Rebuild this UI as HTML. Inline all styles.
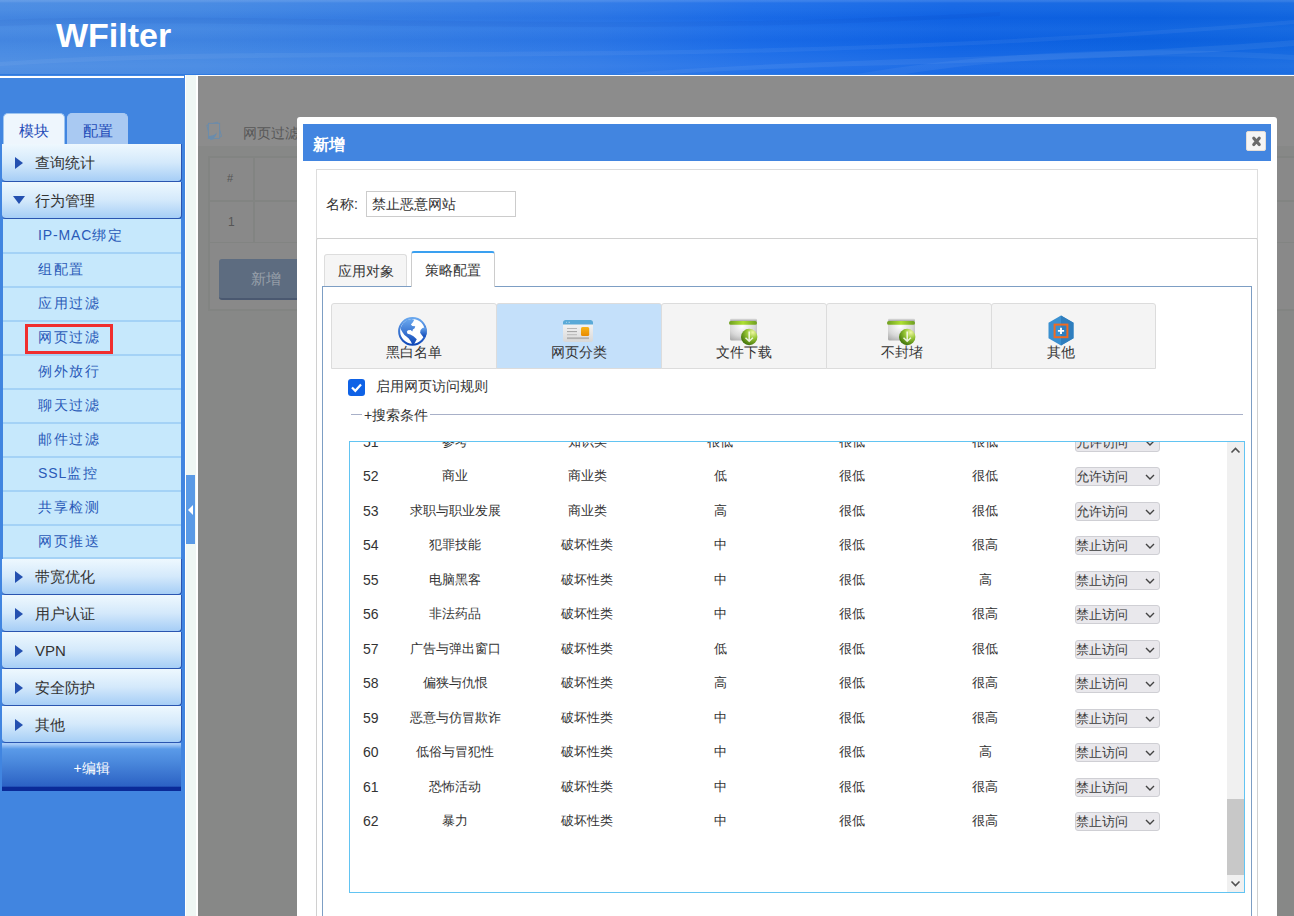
<!DOCTYPE html>
<html><head><meta charset="utf-8">
<style>
*{box-sizing:border-box;margin:0;padding:0}
html,body{width:1294px;height:916px;overflow:hidden;background:#8a8a8a;font-family:"Liberation Sans",sans-serif;position:relative}
.a{position:absolute}
#hdr{left:0;top:0;width:1294px;height:75px;border-bottom:1px solid #2f7ae0;background:linear-gradient(180deg,rgba(255,255,255,.16) 0,rgba(255,255,255,.16) 1px,rgba(255,255,255,.05) 3px,rgba(255,255,255,.03) 10px,rgba(0,40,170,.04) 18px,rgba(255,255,255,.03) 29px,rgba(0,40,170,.035) 40px,rgba(255,255,255,.02) 50px,rgba(255,255,255,.07) 66px,rgba(255,255,255,.04) 75px),linear-gradient(90deg,#4689e2 0px,#4186e2 200px,#3880e4 350px,#2a76e6 600px,#1a6ce8 750px,#0f63e4 950px,#0c62e0 1150px,#1066e0 1294px);overflow:hidden}
#logo{left:56px;top:17px;font:bold 34px/36px "Liberation Sans",sans-serif;color:#fff;white-space:nowrap}
#hline{left:0;top:76px;width:184px;height:2px;background:#fff}
#side{left:0;top:75px;width:185px;height:841px;background:#4185e0}
#strip{left:185px;top:75px;width:12px;height:841px;background:#eff7f4;border-left:1px solid #fff}
#stripline{left:196px;top:75px;width:2px;height:841px;background:#fff}
#handle{left:186px;top:475px;width:9px;height:69px;background:#5a9ae6}
#handle i{position:absolute;left:2px;top:30px;width:0;height:0;border-top:5px solid transparent;border-bottom:5px solid transparent;border-right:5px solid #fff}
.tab{top:113px;height:31px;border-radius:5px 5px 0 0;font-size:15px;line-height:33px;text-align:center;color:#1f4cb8;border:1px solid #9cc4f0;border-bottom:none}
.mh{left:2px;width:180px;border-right:1px solid #2a55b0;border-bottom:1px solid #2a55b0;border-radius:0 0 4px 4px;background:linear-gradient(#eef8fe,#d4e9fb 50%,#a6cef6);color:#333;font-size:15px}
.mh span{position:absolute;left:33px;top:0;white-space:nowrap}
.mh b{position:absolute;left:13px;width:0;height:0}
.tri-r{border-top:6px solid transparent;border-bottom:6px solid transparent;border-left:8px solid #2450b0}
.tri-d{border-left:6.5px solid transparent;border-right:6.5px solid transparent;border-top:8px solid #2450b0;margin-left:-2px}
.sm{left:3px;width:178px;height:34px;background:#c6e8fc;color:#2a5ab8;font-size:14px}
.sm i{position:absolute;left:0;top:-1px;width:178px;height:2px;background:#a4d2f6}
.sm span{position:absolute;left:35px;top:-1px;white-space:nowrap;line-height:34px;letter-spacing:1.5px}
</style></head><body>
<div id="hdr" class="a"><svg class="a" style="left:0;top:0" width="1294" height="75">
<path d="M0 62 C300 40 700 70 1294 20 L1294 24 C700 74 300 46 0 66 Z" fill="rgba(255,255,255,.05)"/>
<path d="M600 75 C850 55 1050 60 1294 40 L1294 46 C1050 66 850 62 650 75 Z" fill="rgba(255,255,255,.06)"/>
<path d="M850 75 C1000 50 1150 45 1294 55 L1294 60 C1150 52 1000 58 900 75 Z" fill="rgba(255,255,255,.05)"/>
<path d="M0 20 C250 10 600 35 1000 12 L1000 16 C600 40 250 16 0 26 Z" fill="rgba(0,30,150,.05)"/>
</svg><div id="logo" class="a">WFilter</div></div>
<div id="side" class="a"></div>
<div id="hline" class="a"></div>
<div id="strip" class="a"></div><div id="stripline" class="a"></div>
<div id="handle" class="a"><i></i></div>
<div class="a tab" style="left:3px;width:62px;background:#eef6fd">模块</div>
<div class="a tab" style="left:67px;width:61px;background:#a9c9f2;border-color:#a9c9f2">配置</div>
<div class="a mh" style="top:144px;height:38px;line-height:38px"><b class="tri-r" style="top:13px"></b><span>查询统计</span></div>
<div class="a mh" style="top:182px;height:37px;line-height:37px"><b class="tri-d" style="top:14px"></b><span>行为管理</span></div>
<div class="a sm" style="top:219px"><span><em style="font-style:normal;letter-spacing:0.85px">IP-MAC</em>绑定</span></div>
<div class="a sm" style="top:253px"><i></i><span>组配置</span></div>
<div class="a sm" style="top:287px"><i></i><span>应用过滤</span></div>
<div class="a sm" style="top:321px"><i></i><span>网页过滤</span></div>
<div class="a sm" style="top:355px"><i></i><span>例外放行</span></div>
<div class="a sm" style="top:389px"><i></i><span>聊天过滤</span></div>
<div class="a sm" style="top:423px"><i></i><span>邮件过滤</span></div>
<div class="a sm" style="top:457px"><i></i><span><em style="font-style:normal;letter-spacing:0.85px">SSL</em>监控</span></div>
<div class="a sm" style="top:491px"><i></i><span>共享检测</span></div>
<div class="a sm" style="top:525px"><i></i><span>网页推送</span></div>
<div class="a" style="left:3px;top:557px;width:178px;height:2px;background:#a4d2f6"></div>
<div class="a mh" style="top:559px;height:36px;line-height:36px"><b class="tri-r" style="top:12px"></b><span>带宽优化</span></div>
<div class="a mh" style="top:595px;height:37px;line-height:37px"><b class="tri-r" style="top:13px"></b><span>用户认证</span></div>
<div class="a mh" style="top:632px;height:37px;line-height:37px"><b class="tri-r" style="top:13px"></b><span>VPN</span></div>
<div class="a mh" style="top:669px;height:37px;line-height:37px"><b class="tri-r" style="top:13px"></b><span>安全防护</span></div>
<div class="a mh" style="top:706px;height:37px;line-height:37px"><b class="tri-r" style="top:13px"></b><span>其他</span></div>
<div class="a" style="left:2px;top:743px;width:179px;height:48px;background:linear-gradient(#a8ccf8 0,#a8ccf8 1px,#5a9ae8 6px,#4a88dc 40%,#2c62c4 90%,#0a2a98 92%,#0a2a98 100%);color:#fff;font-size:14px;text-align:center;line-height:50px">+编辑</div>
<div class="a" style="left:25px;top:324px;width:88px;height:30px;border:3px solid #f02e2e"></div>
<div class="a" style="left:196px;top:75px;width:1098px;height:1px;background:#fff"></div>
<div class="a" style="left:198px;top:76px;width:1096px;height:70px;background:#8c8c8c"></div>
<div class="a" style="left:198px;top:146px;width:1096px;height:770px;background:#878887"></div>
<svg class="a" style="left:200px;top:115px" width="30" height="30" viewBox="0 0 916 916">
<path d="M205 315 L535 215 L660 655 L325 755 Z" fill="#8c8c8c" stroke="#6a8cac" stroke-width="28" stroke-linejoin="round"/>
<rect x="258" y="255" width="340" height="460" fill="#8e8e8e" stroke="#6a8cac" stroke-width="28"/>
<path d="M265 640 C400 630 490 590 510 510 C520 600 470 680 400 715 L265 715 Z" fill="#6a8cac"/>
</svg>
<div class="a" style="left:243px;top:123px;font-size:14px;line-height:20px;color:#585858">网页过滤</div>
<div class="a" style="left:208px;top:156px;width:1086px;height:88px;border:2px solid #828482;border-right:none;background:#898989"></div>
<div class="a" style="left:208px;top:200px;width:1086px;height:2px;background:#828482"></div>
<div class="a" style="left:253px;top:156px;width:2px;height:87px;background:#828482"></div>
<div class="a" style="left:227px;top:170px;font-size:11px;line-height:16px;color:#555">#</div>
<div class="a" style="left:228px;top:214px;font-size:12px;line-height:16px;color:#555">1</div>
<div class="a" style="left:208px;top:243px;width:1086px;height:68px;border:2px solid #828482;border-top:none;border-right:none;background:#898989"></div>
<div class="a" style="left:219px;top:259px;width:90px;height:41px;background:#5d6c80;border-bottom:2px solid #4a5870;border-radius:3px;color:#98a0aa;font-size:15px;line-height:40px;padding-left:32px">新增</div>
<div class="a" style="left:297px;top:117px;width:980px;height:820px;background:#fff;border-radius:3px"></div>
<div class="a" style="left:303px;top:124px;width:968px;height:37px;background:#4285e0"></div>
<div class="a" style="left:313px;top:126px;height:37px;line-height:37px;font-size:16px;font-weight:bold;color:#fff">新增</div>
<div class="a" style="left:1246px;top:131px;width:20px;height:20px;background:#f5f5f5;border-radius:2px;border:1px solid #e4ddd6"><svg width="18" height="18" style="position:absolute;left:0;top:0"><path d="M6.8 6.3L12.2 12.5M12.2 6.3L6.8 12.5" stroke="#6b6b6b" stroke-width="3.2" stroke-linecap="round"/></svg></div>
<div class="a" style="left:316px;top:169px;width:942px;height:70px;border:1px solid #ddd"></div>
<div class="a" style="left:326px;top:194px;font-size:14px;line-height:20px;color:#333;white-space:nowrap">名称:</div>
<div class="a" style="left:366px;top:191px;width:150px;height:26px;border:1px solid #ccc;font-size:14px;line-height:24px;color:#333;padding-left:5px;white-space:nowrap">禁止恶意网站</div>
<div class="a" style="left:316px;top:238px;width:942px;height:700px;border:1px solid #d0d0d0;border-radius:2px"></div>
<div class="a" style="left:324px;top:254px;width:83px;height:33px;background:#f5f5f5;border:1px solid #ddd;border-bottom:none;border-radius:3px 3px 0 0;font-size:14px;line-height:32px;text-align:center;color:#333">应用对象</div>
<div class="a" style="left:322px;top:286px;width:930px;height:700px;border:1px solid #7d9ec4"></div>
<div class="a" style="left:411px;top:251px;width:84px;height:36px;background:#fff;border:1px solid #ccc;border-top:2px solid #3aa0f0;border-bottom:none;border-radius:3px 3px 0 0;font-size:14px;line-height:34px;text-align:center;color:#333">策略配置</div>
<div class="a" style="left:331px;top:303px;width:166px;height:66px;background:#f4f4f4;border:1px solid #dcdcdc;border-radius:3px 3px 0 0"></div>
<div class="a" style="left:363.5px;top:342px;width:100px;text-align:center;font-size:14px;line-height:20px;color:#333;white-space:nowrap">黑白名单</div>
<div class="a" style="left:496px;top:303px;width:166px;height:66px;background:#c4e0fa;border:1px solid #dcdcdc;border-radius:3px 3px 0 0"></div>
<div class="a" style="left:528.5px;top:342px;width:100px;text-align:center;font-size:14px;line-height:20px;color:#333;white-space:nowrap">网页分类</div>
<div class="a" style="left:661px;top:303px;width:166px;height:66px;background:#f4f4f4;border:1px solid #dcdcdc;border-radius:3px 3px 0 0"></div>
<div class="a" style="left:693.5px;top:342px;width:100px;text-align:center;font-size:14px;line-height:20px;color:#333;white-space:nowrap">文件下载</div>
<div class="a" style="left:826px;top:303px;width:166px;height:66px;background:#f4f4f4;border:1px solid #dcdcdc;border-radius:3px 3px 0 0"></div>
<div class="a" style="left:851.5px;top:342px;width:100px;text-align:center;font-size:14px;line-height:20px;color:#333;white-space:nowrap">不封堵</div>
<div class="a" style="left:991px;top:303px;width:165px;height:66px;background:#f4f4f4;border:1px solid #dcdcdc;border-radius:3px 3px 0 0"></div>
<div class="a" style="left:1011px;top:342px;width:100px;text-align:center;font-size:14px;line-height:20px;color:#333;white-space:nowrap">其他</div>
<svg class="a" style="left:395px;top:313px" width="36" height="36" viewBox="0 0 916 916">
<defs><linearGradient id="gb" x1="0" y1="0" x2="0" y2="1"><stop offset="0" stop-color="#6aa8ee"/><stop offset="1" stop-color="#1048b8"/></linearGradient></defs>
<circle cx="445" cy="466" r="340" fill="#fff" stroke="url(#gb)" stroke-width="52"/>
<path d="M140 380 L200 270 L300 180 L420 150 L490 170 L455 235 L405 295 L440 330 L515 335 L500 385 L455 420 L440 470 L400 430 L330 440 L300 480 L320 525 L390 550 L470 590 L555 665 L520 730 L490 790 L440 800 L400 720 L350 650 L290 600 L240 560 L190 490 L150 420 Z" fill="url(#gb)"/>
<path d="M700 380 L650 430 L640 500 L680 560 L720 610 L780 600 L805 520 L800 420 L770 360 Z" fill="url(#gb)"/>
</svg>
<svg class="a" style="left:563px;top:320px" width="30" height="22" viewBox="0 0 30 22">
<defs><linearGradient id="gw" x1="0" y1="0" x2="0" y2="1"><stop offset="0" stop-color="#fafafa"/><stop offset="1" stop-color="#d8d8d8"/></linearGradient>
<linearGradient id="go" x1="0" y1="0" x2="0" y2="1"><stop offset="0" stop-color="#f8b418"/><stop offset="1" stop-color="#e88a00"/></linearGradient></defs>
<rect x="0" y="0" width="30" height="22" rx="2.5" fill="url(#gw)"/>
<path d="M2.5 0 H27.5 A2.5 2.5 0 0 1 30 2.5 V4.5 H0 V2.5 A2.5 2.5 0 0 1 2.5 0Z" fill="#5aaad8"/>
<rect x="4" y="8" width="10" height="1" fill="#b8b8b8"/><rect x="4" y="11.1" width="10" height="1" fill="#a0a0a0"/><rect x="4" y="14.2" width="10" height="1" fill="#b8b8b8"/>
<rect x="18" y="7.1" width="8.2" height="8.9" rx="1.5" fill="url(#go)"/>
<rect x="4" y="17.3" width="22" height="1.8" fill="#b0b0b0"/><rect x="3" y="1.8" width="1" height="1" fill="rgba(255,255,255,.5)"/><rect x="5.5" y="1.8" width="1.5" height="1" fill="rgba(255,255,255,.5)"/>
</svg>
<svg class="a" style="left:729px;top:318px" width="30" height="28" viewBox="0 0 30 28">
<defs><radialGradient id="gg729" cx="45%" cy="35%" r="75%"><stop offset="0" stop-color="#fefefe"/><stop offset="0.6" stop-color="#d8d8d8"/><stop offset="1" stop-color="#aaaaaa"/></radialGradient>
<linearGradient id="gt729" x1="0" y1="0" x2="1" y2="0"><stop offset="0" stop-color="#6e9e20"/><stop offset="0.5" stop-color="#aee034"/><stop offset="1" stop-color="#6e9e20"/></linearGradient>
<linearGradient id="gs729" x1="0" y1="0" x2="0" y2="1"><stop offset="0" stop-color="#f0f0f0"/><stop offset="1" stop-color="#9a9a9a"/></linearGradient>
<radialGradient id="gc729" cx="72%" cy="22%" r="85%"><stop offset="0" stop-color="#eef8a0"/><stop offset="0.45" stop-color="#94c434"/><stop offset="1" stop-color="#3e7008"/></radialGradient></defs>
<rect x="1" y="1" width="27" height="21.5" rx="1.5" fill="url(#gg729)"/>
<rect x="1.5" y="0.3" width="26" height="3.2" rx="1" fill="url(#gs729)"/>
<rect x="0" y="3" width="28" height="3.8" rx="1.9" fill="url(#gt729)"/>
<circle cx="20.2" cy="19" r="8.2" fill="url(#gc729)"/>
<path d="M20.2 13.5 V23.3 M16.5 19.8 L20.2 23.3 L23.9 19.8" stroke="rgba(255,255,255,.85)" stroke-width="1.5" fill="none"/>
</svg>
<svg class="a" style="left:887px;top:318px" width="30" height="28" viewBox="0 0 30 28">
<defs><radialGradient id="gg887" cx="45%" cy="35%" r="75%"><stop offset="0" stop-color="#fefefe"/><stop offset="0.6" stop-color="#d8d8d8"/><stop offset="1" stop-color="#aaaaaa"/></radialGradient>
<linearGradient id="gt887" x1="0" y1="0" x2="1" y2="0"><stop offset="0" stop-color="#6e9e20"/><stop offset="0.5" stop-color="#aee034"/><stop offset="1" stop-color="#6e9e20"/></linearGradient>
<linearGradient id="gs887" x1="0" y1="0" x2="0" y2="1"><stop offset="0" stop-color="#f0f0f0"/><stop offset="1" stop-color="#9a9a9a"/></linearGradient>
<radialGradient id="gc887" cx="72%" cy="22%" r="85%"><stop offset="0" stop-color="#eef8a0"/><stop offset="0.45" stop-color="#94c434"/><stop offset="1" stop-color="#3e7008"/></radialGradient></defs>
<rect x="1" y="1" width="27" height="21.5" rx="1.5" fill="url(#gg887)"/>
<rect x="1.5" y="0.3" width="26" height="3.2" rx="1" fill="url(#gs887)"/>
<rect x="0" y="3" width="28" height="3.8" rx="1.9" fill="url(#gt887)"/>
<circle cx="20.2" cy="19" r="8.2" fill="url(#gc887)"/>
<path d="M20.2 13.5 V23.3 M16.5 19.8 L20.2 23.3 L23.9 19.8" stroke="rgba(255,255,255,.85)" stroke-width="1.5" fill="none"/>
</svg>
<svg class="a" style="left:1048px;top:315px" width="26" height="31" viewBox="0 0 26 31">
<path d="M13 0.5 L25.5 7.8 V23.2 L13 30.5 L0.5 23.2 V7.8 Z" fill="#3a90d0"/>
<path d="M13 0.5 L25.5 7.8 V23.2 L13 30.5 Z" fill="#2f7ebe"/>
<rect x="6.6" y="9.6" width="12.8" height="12.6" fill="none" stroke="#f06a20" stroke-width="2"/>
<path d="M13 12.8 V19 M9.9 15.9 H16.1" stroke="#fff" stroke-width="1.9"/>
</svg>
<div class="a" style="left:348px;top:379px;width:17px;height:17px;background:#0f62e6;border-radius:3px"><svg width="17" height="17" style="position:absolute;left:0;top:0"><path d="M4 8.5 L7.3 11.8 L13 5.5" stroke="#fff" stroke-width="2.2" fill="none"/></svg></div>
<div class="a" style="left:376px;top:377px;font-size:13.6px;line-height:20px;color:#333;white-space:nowrap">启用网页访问规则</div>
<div class="a" style="left:351px;top:414px;width:892px;height:1px;background:#a8b0c8"></div>
<div class="a" style="left:362px;top:405px;padding:0 2px;background:#fff;font-size:14px;line-height:20px;color:#333;white-space:nowrap">+搜索条件</div>
<div class="a" style="left:349px;top:441px;width:896px;height:452px;border:1px solid #62c4f2;overflow:hidden">
<div class="a" style="left:13px;top:-10.5px;font-size:14px;line-height:20px;color:#333">51</div>
<div class="a" style="left:25px;top:-10.5px;width:160px;text-align:center;font-size:13px;line-height:20px;color:#333;white-space:nowrap">参考</div>
<div class="a" style="left:157px;top:-10.5px;width:160px;text-align:center;font-size:13px;line-height:20px;color:#333;white-space:nowrap">知识类</div>
<div class="a" style="left:290px;top:-10.5px;width:160px;text-align:center;font-size:13px;line-height:20px;color:#333;white-space:nowrap">很低</div>
<div class="a" style="left:422px;top:-10.5px;width:160px;text-align:center;font-size:13px;line-height:20px;color:#333;white-space:nowrap">很低</div>
<div class="a" style="left:555px;top:-10.5px;width:160px;text-align:center;font-size:13px;line-height:20px;color:#333;white-space:nowrap">很低</div>
<div class="a" style="left:725px;top:-9.5px;width:85px;height:19px;background:#e9e8ec;border:1px solid #cfcfd4;border-radius:3px;font-size:13px;line-height:17px;color:#3c3c3c;white-space:nowrap">允许访问<svg width="10" height="6" style="position:absolute;left:69px;top:6px"><path d="M1 1 L5 5 L9 1" stroke="#444" stroke-width="1.4" fill="none"/></svg></div>
<div class="a" style="left:13px;top:24.0px;font-size:14px;line-height:20px;color:#333">52</div>
<div class="a" style="left:25px;top:24.0px;width:160px;text-align:center;font-size:13px;line-height:20px;color:#333;white-space:nowrap">商业</div>
<div class="a" style="left:157px;top:24.0px;width:160px;text-align:center;font-size:13px;line-height:20px;color:#333;white-space:nowrap">商业类</div>
<div class="a" style="left:290px;top:24.0px;width:160px;text-align:center;font-size:13px;line-height:20px;color:#333;white-space:nowrap">低</div>
<div class="a" style="left:422px;top:24.0px;width:160px;text-align:center;font-size:13px;line-height:20px;color:#333;white-space:nowrap">很低</div>
<div class="a" style="left:555px;top:24.0px;width:160px;text-align:center;font-size:13px;line-height:20px;color:#333;white-space:nowrap">很低</div>
<div class="a" style="left:725px;top:25.0px;width:85px;height:19px;background:#e9e8ec;border:1px solid #cfcfd4;border-radius:3px;font-size:13px;line-height:17px;color:#3c3c3c;white-space:nowrap">允许访问<svg width="10" height="6" style="position:absolute;left:69px;top:6px"><path d="M1 1 L5 5 L9 1" stroke="#444" stroke-width="1.4" fill="none"/></svg></div>
<div class="a" style="left:13px;top:58.5px;font-size:14px;line-height:20px;color:#333">53</div>
<div class="a" style="left:25px;top:58.5px;width:160px;text-align:center;font-size:13px;line-height:20px;color:#333;white-space:nowrap">求职与职业发展</div>
<div class="a" style="left:157px;top:58.5px;width:160px;text-align:center;font-size:13px;line-height:20px;color:#333;white-space:nowrap">商业类</div>
<div class="a" style="left:290px;top:58.5px;width:160px;text-align:center;font-size:13px;line-height:20px;color:#333;white-space:nowrap">高</div>
<div class="a" style="left:422px;top:58.5px;width:160px;text-align:center;font-size:13px;line-height:20px;color:#333;white-space:nowrap">很低</div>
<div class="a" style="left:555px;top:58.5px;width:160px;text-align:center;font-size:13px;line-height:20px;color:#333;white-space:nowrap">很低</div>
<div class="a" style="left:725px;top:59.5px;width:85px;height:19px;background:#e9e8ec;border:1px solid #cfcfd4;border-radius:3px;font-size:13px;line-height:17px;color:#3c3c3c;white-space:nowrap">允许访问<svg width="10" height="6" style="position:absolute;left:69px;top:6px"><path d="M1 1 L5 5 L9 1" stroke="#444" stroke-width="1.4" fill="none"/></svg></div>
<div class="a" style="left:13px;top:93.0px;font-size:14px;line-height:20px;color:#333">54</div>
<div class="a" style="left:25px;top:93.0px;width:160px;text-align:center;font-size:13px;line-height:20px;color:#333;white-space:nowrap">犯罪技能</div>
<div class="a" style="left:157px;top:93.0px;width:160px;text-align:center;font-size:13px;line-height:20px;color:#333;white-space:nowrap">破坏性类</div>
<div class="a" style="left:290px;top:93.0px;width:160px;text-align:center;font-size:13px;line-height:20px;color:#333;white-space:nowrap">中</div>
<div class="a" style="left:422px;top:93.0px;width:160px;text-align:center;font-size:13px;line-height:20px;color:#333;white-space:nowrap">很低</div>
<div class="a" style="left:555px;top:93.0px;width:160px;text-align:center;font-size:13px;line-height:20px;color:#333;white-space:nowrap">很高</div>
<div class="a" style="left:725px;top:94.0px;width:85px;height:19px;background:#e9e8ec;border:1px solid #cfcfd4;border-radius:3px;font-size:13px;line-height:17px;color:#3c3c3c;white-space:nowrap">禁止访问<svg width="10" height="6" style="position:absolute;left:69px;top:6px"><path d="M1 1 L5 5 L9 1" stroke="#444" stroke-width="1.4" fill="none"/></svg></div>
<div class="a" style="left:13px;top:127.5px;font-size:14px;line-height:20px;color:#333">55</div>
<div class="a" style="left:25px;top:127.5px;width:160px;text-align:center;font-size:13px;line-height:20px;color:#333;white-space:nowrap">电脑黑客</div>
<div class="a" style="left:157px;top:127.5px;width:160px;text-align:center;font-size:13px;line-height:20px;color:#333;white-space:nowrap">破坏性类</div>
<div class="a" style="left:290px;top:127.5px;width:160px;text-align:center;font-size:13px;line-height:20px;color:#333;white-space:nowrap">中</div>
<div class="a" style="left:422px;top:127.5px;width:160px;text-align:center;font-size:13px;line-height:20px;color:#333;white-space:nowrap">很低</div>
<div class="a" style="left:555px;top:127.5px;width:160px;text-align:center;font-size:13px;line-height:20px;color:#333;white-space:nowrap">高</div>
<div class="a" style="left:725px;top:128.5px;width:85px;height:19px;background:#e9e8ec;border:1px solid #cfcfd4;border-radius:3px;font-size:13px;line-height:17px;color:#3c3c3c;white-space:nowrap">禁止访问<svg width="10" height="6" style="position:absolute;left:69px;top:6px"><path d="M1 1 L5 5 L9 1" stroke="#444" stroke-width="1.4" fill="none"/></svg></div>
<div class="a" style="left:13px;top:162.0px;font-size:14px;line-height:20px;color:#333">56</div>
<div class="a" style="left:25px;top:162.0px;width:160px;text-align:center;font-size:13px;line-height:20px;color:#333;white-space:nowrap">非法药品</div>
<div class="a" style="left:157px;top:162.0px;width:160px;text-align:center;font-size:13px;line-height:20px;color:#333;white-space:nowrap">破坏性类</div>
<div class="a" style="left:290px;top:162.0px;width:160px;text-align:center;font-size:13px;line-height:20px;color:#333;white-space:nowrap">中</div>
<div class="a" style="left:422px;top:162.0px;width:160px;text-align:center;font-size:13px;line-height:20px;color:#333;white-space:nowrap">很低</div>
<div class="a" style="left:555px;top:162.0px;width:160px;text-align:center;font-size:13px;line-height:20px;color:#333;white-space:nowrap">很高</div>
<div class="a" style="left:725px;top:163.0px;width:85px;height:19px;background:#e9e8ec;border:1px solid #cfcfd4;border-radius:3px;font-size:13px;line-height:17px;color:#3c3c3c;white-space:nowrap">禁止访问<svg width="10" height="6" style="position:absolute;left:69px;top:6px"><path d="M1 1 L5 5 L9 1" stroke="#444" stroke-width="1.4" fill="none"/></svg></div>
<div class="a" style="left:13px;top:196.5px;font-size:14px;line-height:20px;color:#333">57</div>
<div class="a" style="left:25px;top:196.5px;width:160px;text-align:center;font-size:13px;line-height:20px;color:#333;white-space:nowrap">广告与弹出窗口</div>
<div class="a" style="left:157px;top:196.5px;width:160px;text-align:center;font-size:13px;line-height:20px;color:#333;white-space:nowrap">破坏性类</div>
<div class="a" style="left:290px;top:196.5px;width:160px;text-align:center;font-size:13px;line-height:20px;color:#333;white-space:nowrap">低</div>
<div class="a" style="left:422px;top:196.5px;width:160px;text-align:center;font-size:13px;line-height:20px;color:#333;white-space:nowrap">很低</div>
<div class="a" style="left:555px;top:196.5px;width:160px;text-align:center;font-size:13px;line-height:20px;color:#333;white-space:nowrap">很低</div>
<div class="a" style="left:725px;top:197.5px;width:85px;height:19px;background:#e9e8ec;border:1px solid #cfcfd4;border-radius:3px;font-size:13px;line-height:17px;color:#3c3c3c;white-space:nowrap">禁止访问<svg width="10" height="6" style="position:absolute;left:69px;top:6px"><path d="M1 1 L5 5 L9 1" stroke="#444" stroke-width="1.4" fill="none"/></svg></div>
<div class="a" style="left:13px;top:231.0px;font-size:14px;line-height:20px;color:#333">58</div>
<div class="a" style="left:25px;top:231.0px;width:160px;text-align:center;font-size:13px;line-height:20px;color:#333;white-space:nowrap">偏狭与仇恨</div>
<div class="a" style="left:157px;top:231.0px;width:160px;text-align:center;font-size:13px;line-height:20px;color:#333;white-space:nowrap">破坏性类</div>
<div class="a" style="left:290px;top:231.0px;width:160px;text-align:center;font-size:13px;line-height:20px;color:#333;white-space:nowrap">高</div>
<div class="a" style="left:422px;top:231.0px;width:160px;text-align:center;font-size:13px;line-height:20px;color:#333;white-space:nowrap">很低</div>
<div class="a" style="left:555px;top:231.0px;width:160px;text-align:center;font-size:13px;line-height:20px;color:#333;white-space:nowrap">很高</div>
<div class="a" style="left:725px;top:232.0px;width:85px;height:19px;background:#e9e8ec;border:1px solid #cfcfd4;border-radius:3px;font-size:13px;line-height:17px;color:#3c3c3c;white-space:nowrap">禁止访问<svg width="10" height="6" style="position:absolute;left:69px;top:6px"><path d="M1 1 L5 5 L9 1" stroke="#444" stroke-width="1.4" fill="none"/></svg></div>
<div class="a" style="left:13px;top:265.5px;font-size:14px;line-height:20px;color:#333">59</div>
<div class="a" style="left:25px;top:265.5px;width:160px;text-align:center;font-size:13px;line-height:20px;color:#333;white-space:nowrap">恶意与仿冒欺诈</div>
<div class="a" style="left:157px;top:265.5px;width:160px;text-align:center;font-size:13px;line-height:20px;color:#333;white-space:nowrap">破坏性类</div>
<div class="a" style="left:290px;top:265.5px;width:160px;text-align:center;font-size:13px;line-height:20px;color:#333;white-space:nowrap">中</div>
<div class="a" style="left:422px;top:265.5px;width:160px;text-align:center;font-size:13px;line-height:20px;color:#333;white-space:nowrap">很低</div>
<div class="a" style="left:555px;top:265.5px;width:160px;text-align:center;font-size:13px;line-height:20px;color:#333;white-space:nowrap">很高</div>
<div class="a" style="left:725px;top:266.5px;width:85px;height:19px;background:#e9e8ec;border:1px solid #cfcfd4;border-radius:3px;font-size:13px;line-height:17px;color:#3c3c3c;white-space:nowrap">禁止访问<svg width="10" height="6" style="position:absolute;left:69px;top:6px"><path d="M1 1 L5 5 L9 1" stroke="#444" stroke-width="1.4" fill="none"/></svg></div>
<div class="a" style="left:13px;top:300.0px;font-size:14px;line-height:20px;color:#333">60</div>
<div class="a" style="left:25px;top:300.0px;width:160px;text-align:center;font-size:13px;line-height:20px;color:#333;white-space:nowrap">低俗与冒犯性</div>
<div class="a" style="left:157px;top:300.0px;width:160px;text-align:center;font-size:13px;line-height:20px;color:#333;white-space:nowrap">破坏性类</div>
<div class="a" style="left:290px;top:300.0px;width:160px;text-align:center;font-size:13px;line-height:20px;color:#333;white-space:nowrap">中</div>
<div class="a" style="left:422px;top:300.0px;width:160px;text-align:center;font-size:13px;line-height:20px;color:#333;white-space:nowrap">很低</div>
<div class="a" style="left:555px;top:300.0px;width:160px;text-align:center;font-size:13px;line-height:20px;color:#333;white-space:nowrap">高</div>
<div class="a" style="left:725px;top:301.0px;width:85px;height:19px;background:#e9e8ec;border:1px solid #cfcfd4;border-radius:3px;font-size:13px;line-height:17px;color:#3c3c3c;white-space:nowrap">禁止访问<svg width="10" height="6" style="position:absolute;left:69px;top:6px"><path d="M1 1 L5 5 L9 1" stroke="#444" stroke-width="1.4" fill="none"/></svg></div>
<div class="a" style="left:13px;top:334.5px;font-size:14px;line-height:20px;color:#333">61</div>
<div class="a" style="left:25px;top:334.5px;width:160px;text-align:center;font-size:13px;line-height:20px;color:#333;white-space:nowrap">恐怖活动</div>
<div class="a" style="left:157px;top:334.5px;width:160px;text-align:center;font-size:13px;line-height:20px;color:#333;white-space:nowrap">破坏性类</div>
<div class="a" style="left:290px;top:334.5px;width:160px;text-align:center;font-size:13px;line-height:20px;color:#333;white-space:nowrap">中</div>
<div class="a" style="left:422px;top:334.5px;width:160px;text-align:center;font-size:13px;line-height:20px;color:#333;white-space:nowrap">很低</div>
<div class="a" style="left:555px;top:334.5px;width:160px;text-align:center;font-size:13px;line-height:20px;color:#333;white-space:nowrap">很高</div>
<div class="a" style="left:725px;top:335.5px;width:85px;height:19px;background:#e9e8ec;border:1px solid #cfcfd4;border-radius:3px;font-size:13px;line-height:17px;color:#3c3c3c;white-space:nowrap">禁止访问<svg width="10" height="6" style="position:absolute;left:69px;top:6px"><path d="M1 1 L5 5 L9 1" stroke="#444" stroke-width="1.4" fill="none"/></svg></div>
<div class="a" style="left:13px;top:369.0px;font-size:14px;line-height:20px;color:#333">62</div>
<div class="a" style="left:25px;top:369.0px;width:160px;text-align:center;font-size:13px;line-height:20px;color:#333;white-space:nowrap">暴力</div>
<div class="a" style="left:157px;top:369.0px;width:160px;text-align:center;font-size:13px;line-height:20px;color:#333;white-space:nowrap">破坏性类</div>
<div class="a" style="left:290px;top:369.0px;width:160px;text-align:center;font-size:13px;line-height:20px;color:#333;white-space:nowrap">中</div>
<div class="a" style="left:422px;top:369.0px;width:160px;text-align:center;font-size:13px;line-height:20px;color:#333;white-space:nowrap">很低</div>
<div class="a" style="left:555px;top:369.0px;width:160px;text-align:center;font-size:13px;line-height:20px;color:#333;white-space:nowrap">很高</div>
<div class="a" style="left:725px;top:370.0px;width:85px;height:19px;background:#e9e8ec;border:1px solid #cfcfd4;border-radius:3px;font-size:13px;line-height:17px;color:#3c3c3c;white-space:nowrap">禁止访问<svg width="10" height="6" style="position:absolute;left:69px;top:6px"><path d="M1 1 L5 5 L9 1" stroke="#444" stroke-width="1.4" fill="none"/></svg></div>
<div class="a" style="left:877px;top:0;width:17px;height:450px;background:#f0f0f0"></div>
<div class="a" style="left:877px;top:357px;width:17px;height:76px;background:#c8c8c8"></div>
<svg class="a" style="left:880px;top:4px" width="11" height="8"><path d="M1.5 6.5 L5.5 2.5 L9.5 6.5" stroke="#505050" stroke-width="1.6" fill="none"/></svg>
<svg class="a" style="left:880px;top:438px" width="11" height="8"><path d="M1.5 1.5 L5.5 5.5 L9.5 1.5" stroke="#505050" stroke-width="1.6" fill="none"/></svg>
</div>
</body></html>
